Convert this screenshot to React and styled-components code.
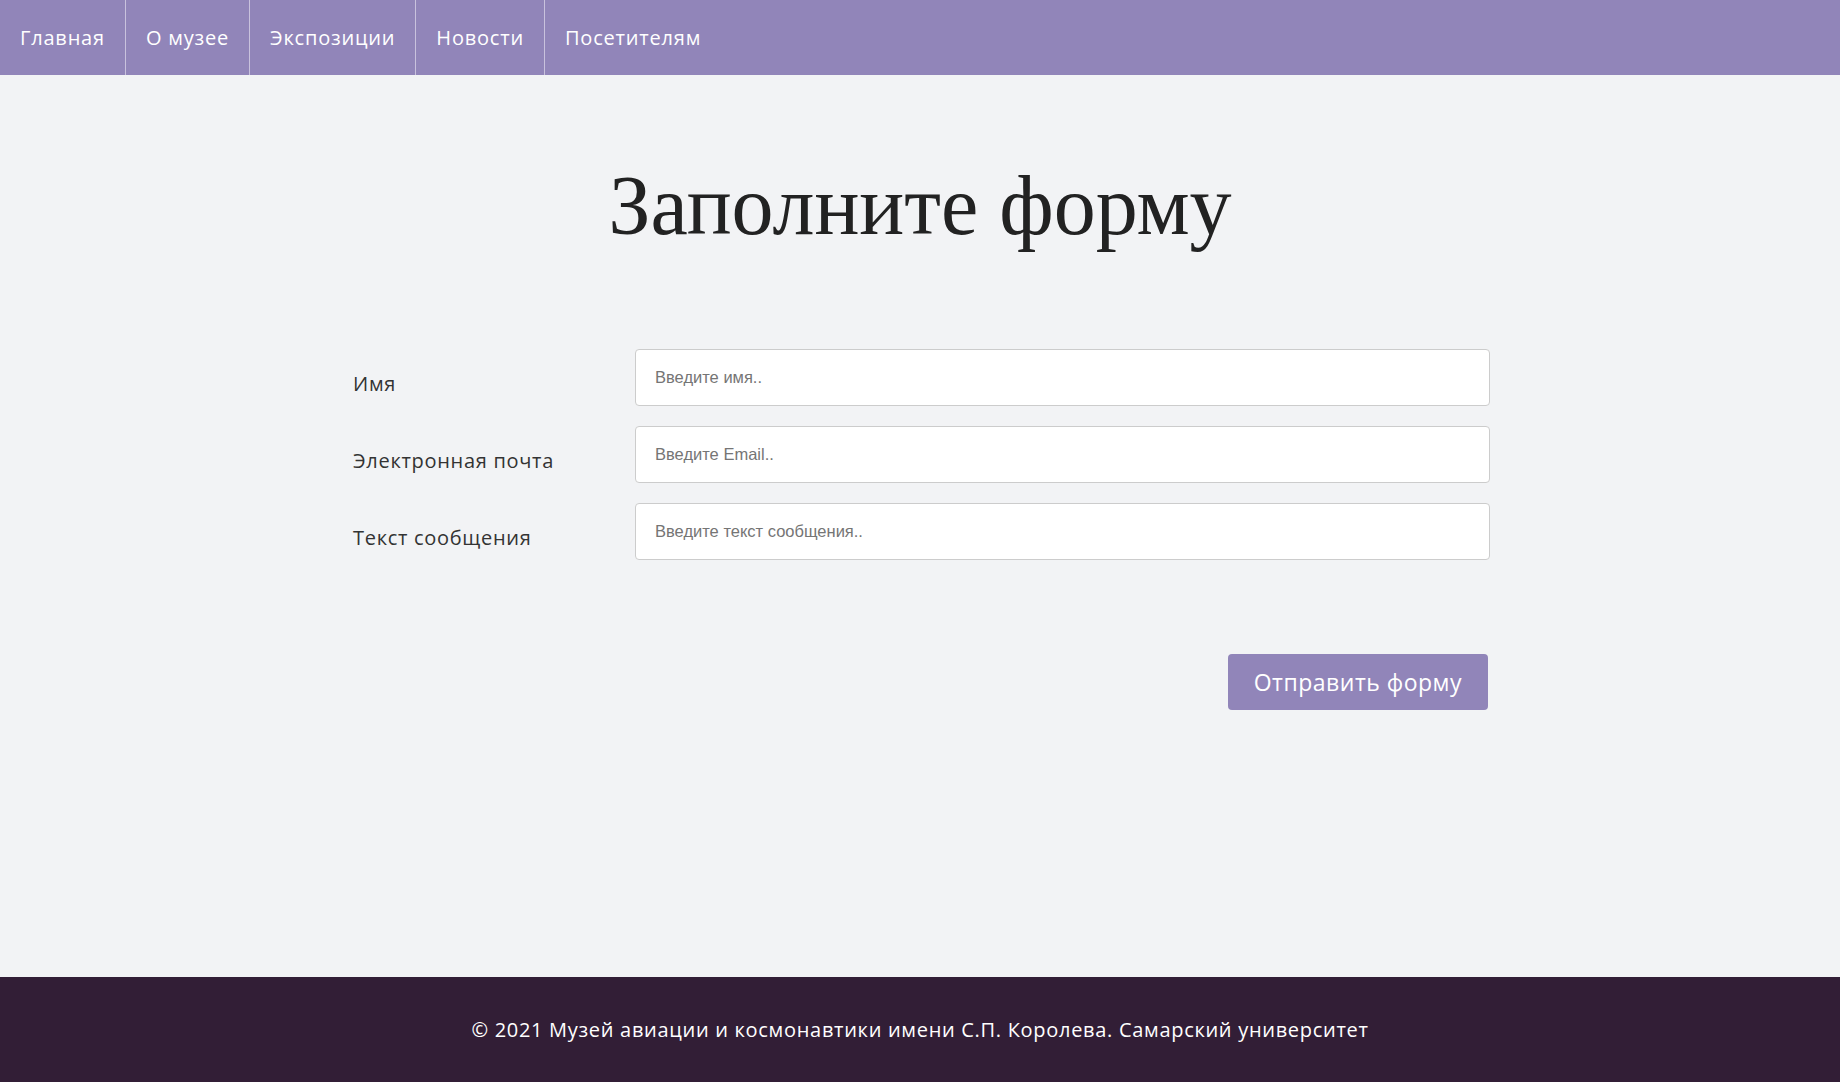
import React from "react";
import styled, { createGlobalStyle } from "styled-components";

const GlobalStyle = createGlobalStyle`
  html, body {
    margin: 0;
    padding: 0;
  }
  body {
    background-color: #f2f3f5;
    font-family: "Open Sans", "Liberation Sans", sans-serif;
    color: #333;
  }
  * {
    box-sizing: border-box;
  }
`;

const Page = styled.div`
  min-height: 100vh;
  display: flex;
  flex-direction: column;
`;

const Nav = styled.nav`
  height: 75px;
  background-color: #9185b9;
  display: flex;
  align-items: stretch;
`;

const NavItem = styled.a`
  display: flex;
  align-items: center;
  padding: 0 20px;
  color: #fff;
  font-size: 20px;
  letter-spacing: 0.8px;
  text-decoration: none;
  border-right: ${(p) => (p.$last ? "none" : "1px solid #c9c2dd")};
`;

const Main = styled.main`
  flex: 1;
  padding-top: 81px;
`;

const Title = styled.h1`
  margin: 0;
  text-align: center;
  font-family: "Liberation Serif", "DejaVu Serif", serif;
  font-weight: 400;
  font-size: 84px;
  color: #222;
  line-height: 1.2;
`;

const Form = styled.form`
  width: 1140px;
  margin: 92px auto 0;
`;

const Row = styled.div`
  display: grid;
  grid-template-columns: 25% 75%;
  align-items: center;
  margin-bottom: 20px;
`;

const Label = styled.label`
  font-size: 20px;
  letter-spacing: 0.7px;
  color: #333;
  padding: 12px 0 0 3px;
`;

const Input = styled.input`
  width: 100%;
  height: 57px;
  padding: 0 19px;
  border: 1px solid #ccc;
  border-radius: 4px;
  background: #fff;
  font-family: "Liberation Sans", Arial, sans-serif;
  font-size: 16.5px;
  color: #333;
  &::placeholder {
    color: #757575;
  }
`;

const Actions = styled.div`
  display: flex;
  justify-content: flex-end;
  padding-top: 74px;
  padding-right: 2px;
`;

const Button = styled.button`
  height: 56px;
  padding: 0 26px;
  border: none;
  border-radius: 4px;
  background-color: #9185b9;
  color: #fff;
  font-family: "Open Sans", "Liberation Sans", sans-serif;
  font-size: 23px;
  letter-spacing: 0.5px;
  cursor: pointer;
`;

const Footer = styled.footer`
  height: 105px;
  background-color: #321e36;
  color: #fff;
  display: flex;
  align-items: center;
  justify-content: center;
  font-size: 20px;
  letter-spacing: 0.7px;
`;

const links = ["Главная", "О музее", "Экспозиции", "Новости", "Посетителям"];

const fields = [
  { label: "Имя", placeholder: "Введите имя.." },
  { label: "Электронная почта", placeholder: "Введите Email.." },
  { label: "Текст сообщения", placeholder: "Введите текст сообщения.." },
];

export default function App() {
  return (
    <Page>
      <GlobalStyle />
      <Nav>
        {links.map((l, i) => (
          <NavItem key={l} href="#" $last={i === links.length - 1}>
            {l}
          </NavItem>
        ))}
      </Nav>
      <Main>
        <Title>Заполните форму</Title>
        <Form onSubmit={(e) => e.preventDefault()}>
          {fields.map((f) => (
            <Row key={f.label}>
              <Label>{f.label}</Label>
              <Input type="text" placeholder={f.placeholder} />
            </Row>
          ))}
          <Actions>
            <Button type="submit">Отправить форму</Button>
          </Actions>
        </Form>
      </Main>
      <Footer>© 2021 Музей авиации и космонавтики имени С.П. Королева. Самарский университет</Footer>
    </Page>
  );
}
